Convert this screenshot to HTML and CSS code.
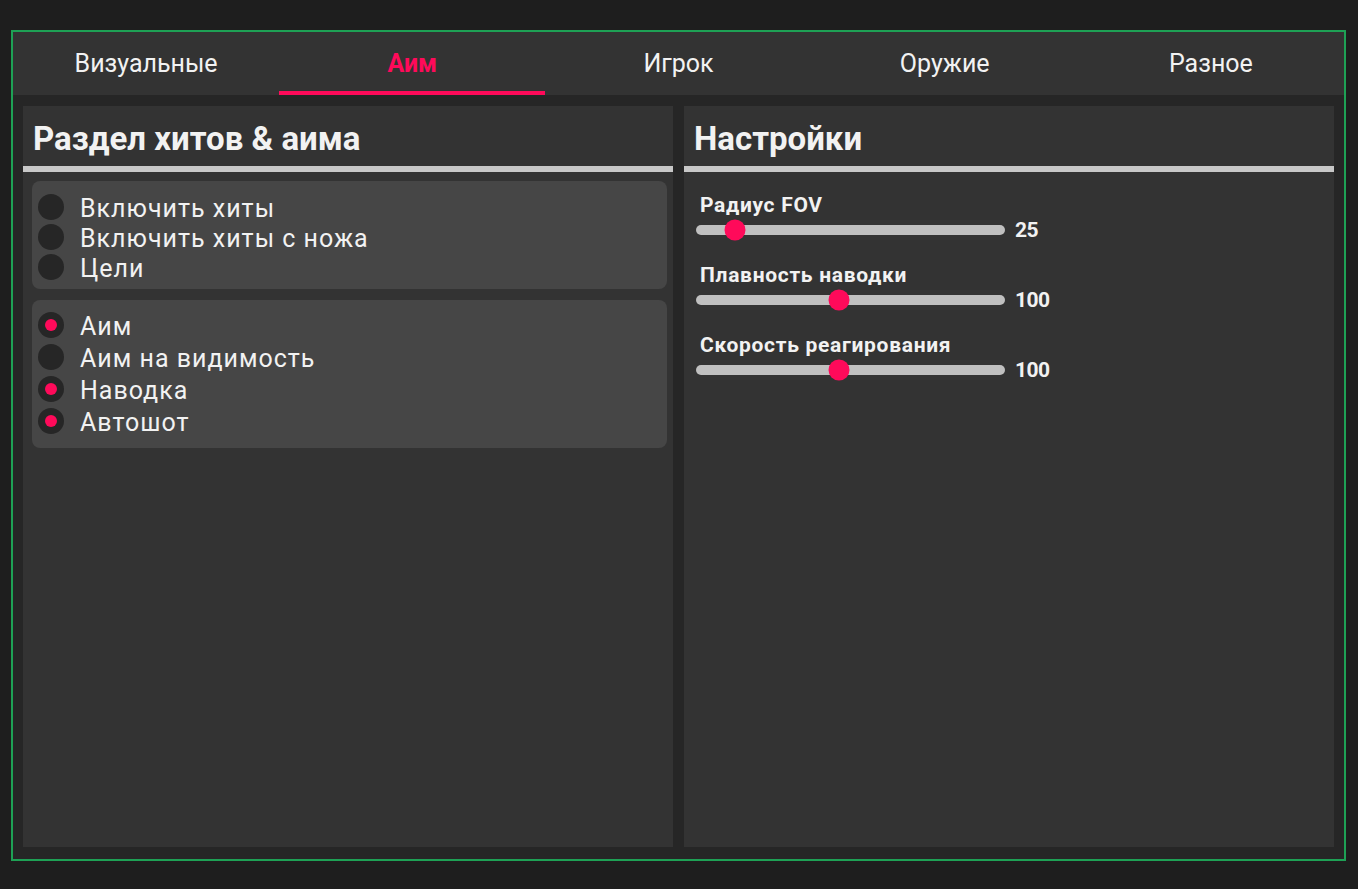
FILE: index.html
```html
<!DOCTYPE html>
<html lang="ru">
<head>
<meta charset="utf-8">
<title>Меню</title>
<link rel="stylesheet" href="styles.css">
</head>
<body>
<div class="frame">
  <nav class="tabs">
    <div class="tab">Визуальные</div>
    <div class="tab active">Аим</div>
    <div class="tab">Игрок</div>
    <div class="tab">Оружие</div>
    <div class="tab">Разное</div>
  </nav>
  <div class="content">
    <section class="panel">
      <h2 class="panel-title">Раздел хитов &amp; аима</h2>
      <div class="panel-rule"></div>
      <div class="group group-a">
        <div class="opt"><span class="check"></span><span>Включить хиты</span></div>
        <div class="opt"><span class="check"></span><span>Включить хиты с ножа</span></div>
        <div class="opt"><span class="check"></span><span>Цели</span></div>
      </div>
      <div class="group group-b">
        <div class="opt"><span class="check on"></span><span>Аим</span></div>
        <div class="opt"><span class="check"></span><span>Аим на видимость</span></div>
        <div class="opt"><span class="check on"></span><span>Наводка</span></div>
        <div class="opt"><span class="check on"></span><span>Автошот</span></div>
      </div>
    </section>
    <section class="panel">
      <h2 class="panel-title">Настройки</h2>
      <div class="panel-rule"></div>
      <div class="sliders">
        <div class="slider">
          <div class="slider-label">Радиус FOV</div>
          <div class="slider-row">
            <div class="track"><span class="thumb" style="left:12.6%"></span></div>
            <span class="value">25</span>
          </div>
        </div>
        <div class="slider">
          <div class="slider-label">Плавность наводки</div>
          <div class="slider-row">
            <div class="track"><span class="thumb" style="left:46.3%"></span></div>
            <span class="value">100</span>
          </div>
        </div>
        <div class="slider">
          <div class="slider-label">Скорость реагирования</div>
          <div class="slider-row">
            <div class="track"><span class="thumb" style="left:46.3%"></span></div>
            <span class="value">100</span>
          </div>
        </div>
      </div>
    </section>
  </div>
</div>
</body>
</html>
```
FILE: styles.css
```css
* { box-sizing: border-box; }
html, body { margin: 0; background: #1e1e1e; }
body {
  padding: 30px 0 0 11px;
  font-family: Roboto, "Noto Sans", "DejaVu Sans", sans-serif;
  color: #f2f2f2;
}
.frame {
  width: 1335px;
  height: 831px;
  border: 2px solid #1ea155;
  background: #262626;
  display: flex;
  flex-direction: column;
}
.tabs {
  display: grid;
  grid-template-columns: repeat(5, 1fr);
  height: 63px;
  background: #333333;
}
.tab {
  display: flex;
  align-items: center;
  justify-content: center;
  font-size: 25px;
  letter-spacing: 0;
  padding-top: 5px;
  padding-bottom: 1px;
  border-bottom: 4px solid transparent;
}
.tab.active {
  color: #ff0a5a;
  font-weight: 700;
  border-bottom-color: #ff0a5a;
}
.content {
  flex: 1;
  display: grid;
  grid-template-columns: 1fr 1fr;
  gap: 11px;
  padding: 11px 10px 12px 10px;
}
.panel {
  background: #333333;
  display: flex;
  flex-direction: column;
}
.panel-title {
  margin: 0;
  height: 60px;
  padding: 14px 0 0 10px;
  font-size: 33px;
  font-weight: 700;
  letter-spacing: 0;
  line-height: 38px;
}
.panel-rule {
  height: 6px;
  background: #c8c8c8;
}
.group {
  background: #464646;
  border-radius: 8px;
  margin: 0 6px 0 9px;
}
.group-a { margin-top: 9px; padding: 11px 0 7px 6px; }
.group-b { margin-top: 11px; padding: 9px 0 11px 6px; }
.group-a .opt { height: 30px; }
.group-b .opt { height: 32px; }
.opt {
  display: flex;
  align-items: center;
  gap: 16px;
  font-size: 25px;
  letter-spacing: 1px;
}
.opt span:last-child { padding-top: 3px; }
.check {
  width: 26px;
  height: 26px;
  border-radius: 50%;
  background: #262626;
  display: flex;
  align-items: center;
  justify-content: center;
  flex: none;
}
.check.on::after {
  content: "";
  width: 12px;
  height: 12px;
  border-radius: 50%;
  background: #ff0a5a;
}
.sliders {
  padding: 20px 0 0 12px;
  display: flex;
  flex-direction: column;
  gap: 10px;
}
.slider { height: 60px; }
.slider-label {
  font-size: 21px;
  font-weight: 700;
  padding-left: 4px;
  height: 26px;
  line-height: 26px;
  letter-spacing: 0.7px;
}
.slider-row {
  display: flex;
  align-items: center;
  gap: 10px;
  height: 24px;
}
.track {
  position: relative;
  width: 309px;
  height: 10px;
  border-radius: 5px;
  background: #c0c0c0;
}
.thumb {
  position: absolute;
  top: 50%;
  width: 21px;
  height: 21px;
  border-radius: 50%;
  background: #ff0a5a;
  transform: translate(-50%, -50%);
}
.value {
  font-size: 21px;
  font-weight: 700;
  letter-spacing: -0.5px;
  line-height: 1;
}
```
